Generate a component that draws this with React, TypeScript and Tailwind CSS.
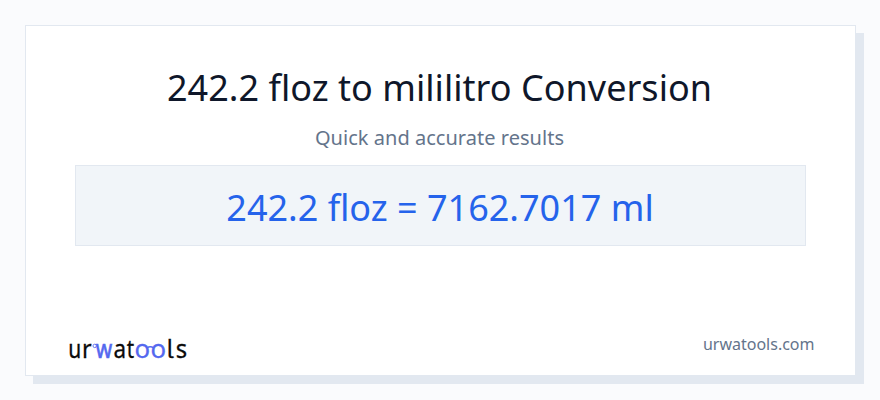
import clsx from "clsx";

export default function App() {
  return (
    <main className="h-[400px] w-[880px] bg-[#fafbfd] pt-[25px] pl-[25px] font-['Noto_Sans',sans-serif]">
      <section className="flex h-[351px] w-[831px] flex-col border border-[#e2e8f0] bg-white px-[49px] pt-[34px] shadow-[8px_8px_0_#e2e8f0]">
        <h1 className="h-14 pr-[2px] text-center text-[36px] leading-[56px] tracking-[0.03px] whitespace-nowrap text-[#0f172a]">
          242.2 floz to mililitro Conversion
        </h1>
        <p className="mt-2 h-7 pr-[2px] text-center text-[20px] leading-7 tracking-[0.03px] text-[#64748b]">
          Quick and accurate results
        </p>
        <div className="mt-[13px] h-[81px] border border-[#e2e8f0] bg-[#f1f5f9] pr-px text-center text-[36px] leading-[84px] text-[#2563eb]">
          242.2 floz = 7162.7017 ml
        </div>
        <footer className="mt-[86px] -mr-[9px] -ml-[9px] flex justify-between">
          <Logo />
          <span className="pr-[0.5px] text-[16px] leading-6 text-[#64748b]">urwatools.com</span>
        </footer>
      </section>
    </main>
  );
}

const LETTERS = [
  { char: "u", x: 2.2, width: 13, blue: false },
  { char: "r", x: 16.1, width: 9.6, blue: false },
  { char: "w", x: 29.8, width: 16.4, blue: true },
  { char: "a", x: 47.4, width: 12.6, blue: false },
  { char: "t", x: 60.8, width: 7.4, blue: false },
  { char: "o", x: 68.6, width: 15.6, blue: true },
  { char: "o", x: 84.4, width: 15.6, blue: true },
  { char: "l", x: 100.2, width: 7.8, blue: false },
  { char: "s", x: 109.8, width: 11.4, blue: false },
];

function Logo() {
  return (
    <svg
      viewBox="0 0 124 32"
      className="h-8 w-[124px] text-[25px]"
      role="img"
      aria-label="urwatools"
    >
      {LETTERS.map(({ char, x, width, blue }) => (
        <text
          key={x}
          x={x}
          y="26.4"
          textLength={width}
          lengthAdjust="spacingAndGlyphs"
          className={clsx(
            blue ? "fill-[#5468ef] stroke-[#5468ef]" : "fill-[#0a0a0a] stroke-[#0a0a0a] stroke-[0.3]",
            char === "w" && "stroke-[0.7]",
            char === "o" && "stroke-[0.3]",
            // Inter's cv05 gives the l its tail
            char === "l" && "font-['Inter',sans-serif] font-light [font-feature-settings:'cv05']",
          )}
        >
          {char}
        </text>
      ))}
      <circle cx="28.7" cy="13.9" r="1.7" fill="white" stroke="#5468ef" strokeWidth="0.9" />
      {/* Bridge of the glasses */}
      <path d="M81 15.8q3.300-2.200 6.600 0" fill="none" stroke="#5468ef" strokeWidth="1.500" />
    </svg>
  );
}
